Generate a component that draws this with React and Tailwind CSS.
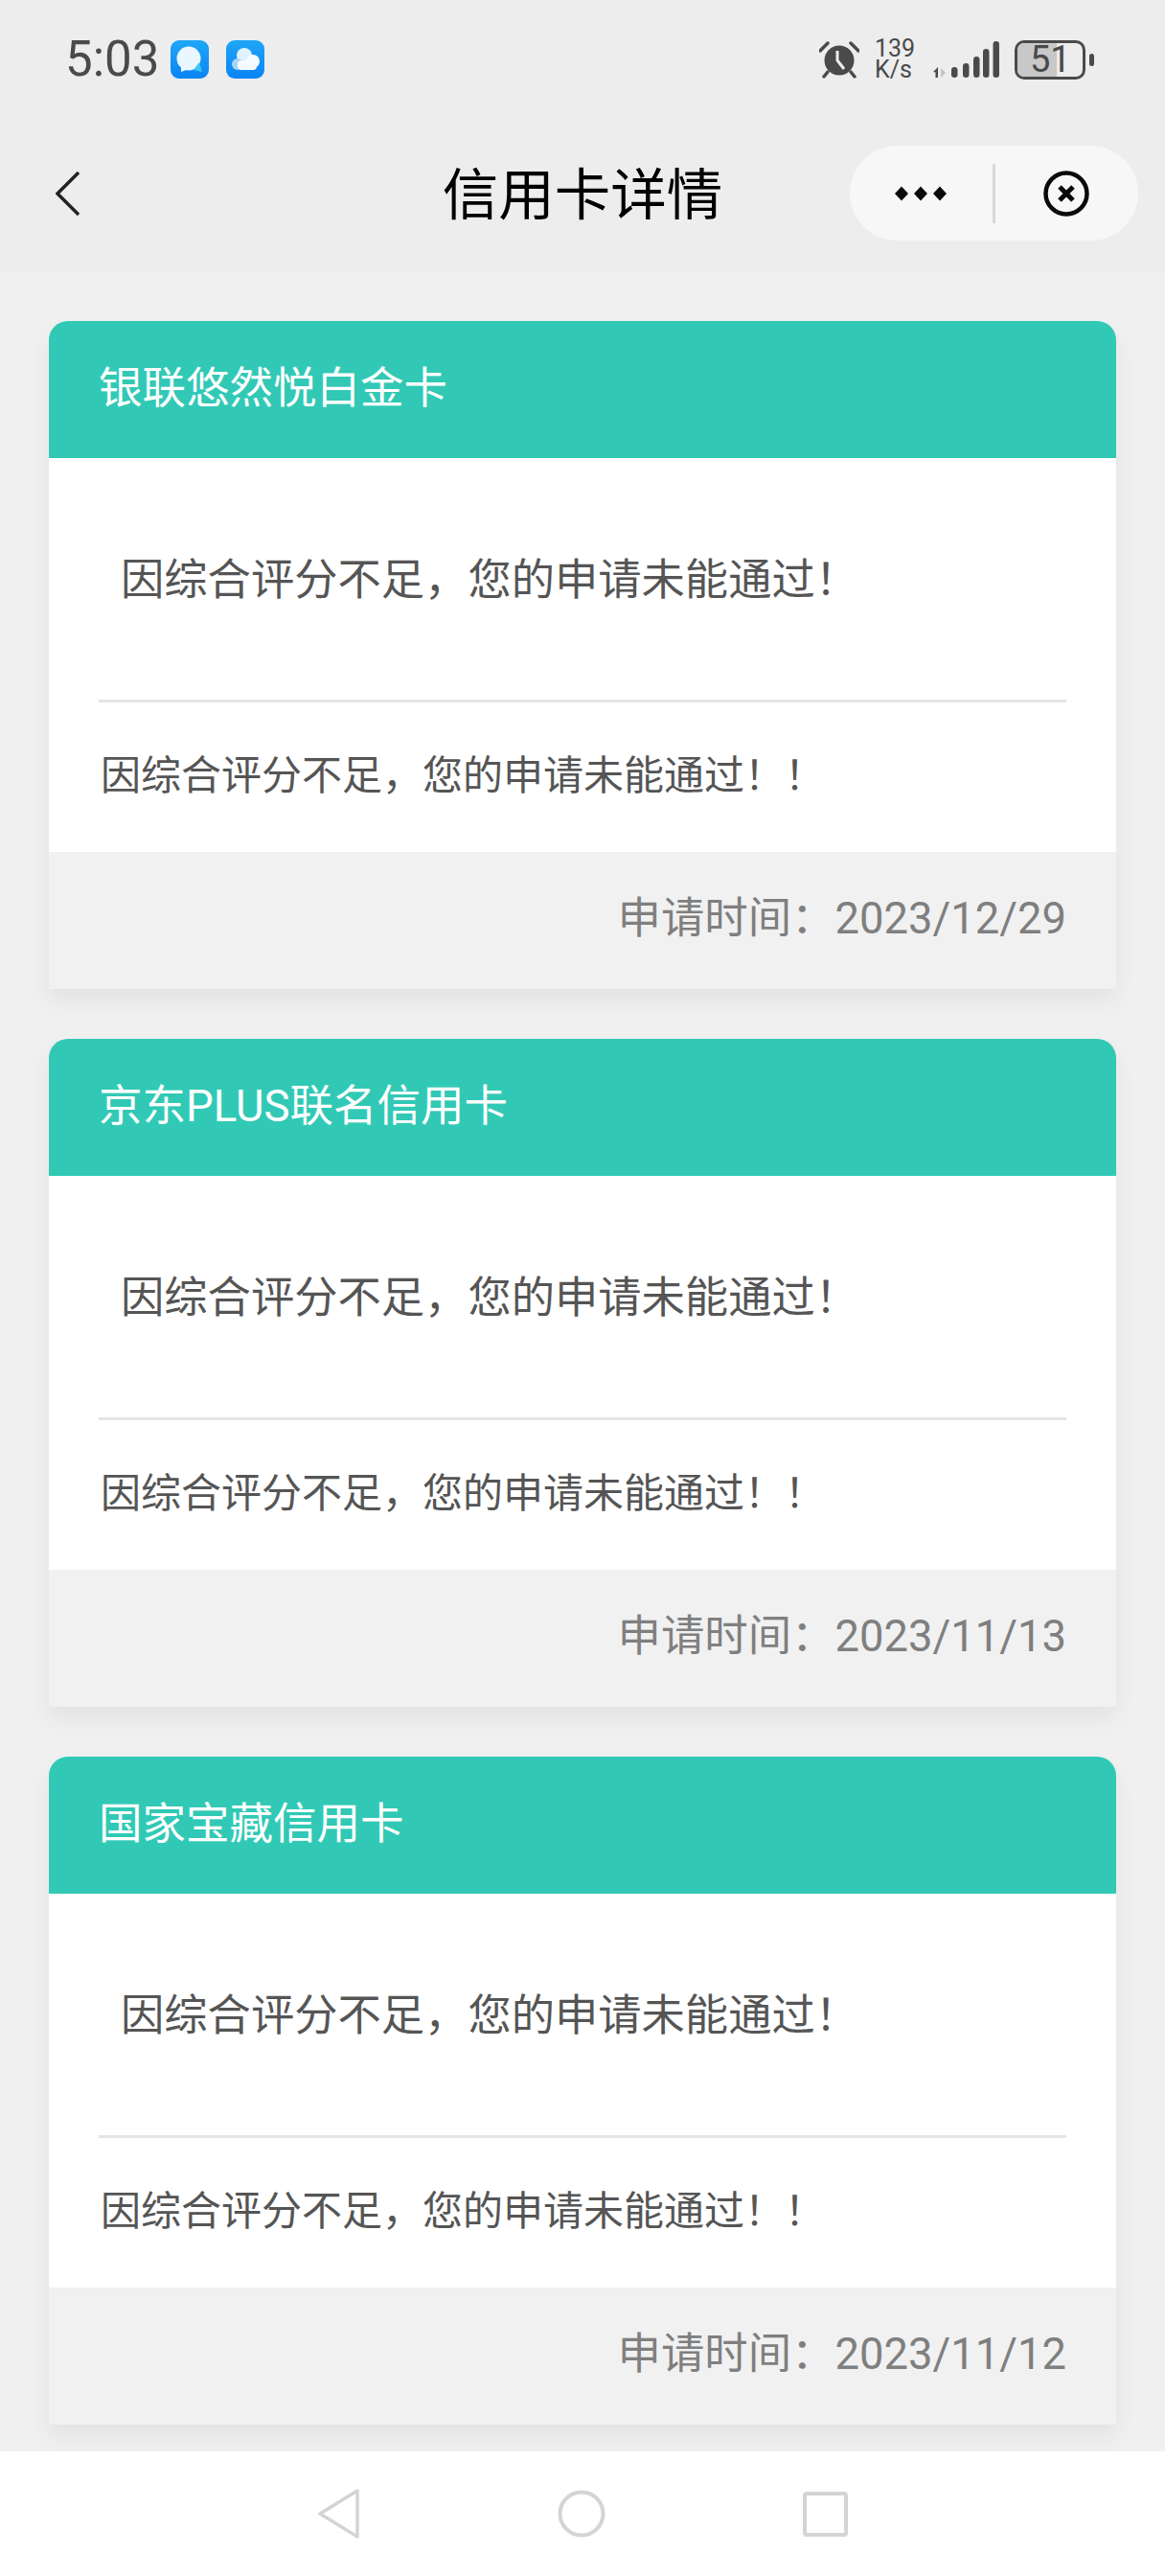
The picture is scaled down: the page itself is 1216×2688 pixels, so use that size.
import React from "react";

const cards = [
  { name: "银联悠然悦白金卡", date: "2023/12/29" },
  { name: "京东PLUS联名信用卡", date: "2023/11/13" },
  { name: "国家宝藏信用卡", date: "2023/11/12" },
];

const FONT = "font-['Roboto','Noto_Sans_CJK_SC',sans-serif]";

const AppIcon = ({ children }) => (
  <svg width="40" height="40" viewBox="0 0 40 40">
    <defs>
      <linearGradient id="appBlue" x1="0" y1="0" x2="0" y2="1">
        <stop offset="0" stopColor="#1fa6f7" />
        <stop offset="1" stopColor="#0a84f5" />
      </linearGradient>
    </defs>
    <rect width="40" height="40" rx="9" fill="url(#appBlue)" />
    {children}
  </svg>
);

const AlarmIcon = () => (
  <svg width="42" height="40" viewBox="0 0 42 40" fill="#4a4a4a">
    <circle cx="21" cy="21" r="15.5" />
    <path d="M1 11 L9 3" stroke="#4a4a4a" strokeWidth="3.5" strokeLinecap="round" />
    <path d="M41 11 L33 3" stroke="#4a4a4a" strokeWidth="3.5" strokeLinecap="round" />
    <path d="M9 33 L5 38" stroke="#4a4a4a" strokeWidth="3.5" strokeLinecap="round" />
    <path d="M33 33 L37 38" stroke="#4a4a4a" strokeWidth="3.5" strokeLinecap="round" />
    <path d="M19 11 L19 21 L26 30" fill="none" stroke="#ededed" strokeWidth="3" />
  </svg>
);

const SignalIcon = () => (
  <svg width="70" height="40" viewBox="0 0 70 40" fill="#4a4a4a">
    <path d="M1 33 L6 28 L6 39 L3.5 39 L3.5 33.5 Z" />
    <path d="M9 29 L14 34 L9 39 Z" fill="#c4c4c4" />
    <rect x="20" y="28" width="6.5" height="11" rx="3.2" />
    <rect x="32" y="24" width="6.5" height="15" rx="3.2" />
    <rect x="43" y="17" width="6.5" height="22" rx="3.2" />
    <rect x="53" y="9" width="6.5" height="30" rx="3.2" />
    <rect x="63.5" y="1" width="6.5" height="38" rx="3.2" />
  </svg>
);

const MoreIcon = () => (
  <svg width="54" height="16" viewBox="0 0 54 16" fill="#0a0a0a">
    <path d="M7 0.5 L14 8 L7 15.5 L0 8 Z" />
    <path d="M27 0.5 L34 8 L27 15.5 L20 8 Z" />
    <path d="M47 0.5 L54 8 L47 15.5 L40 8 Z" />
  </svg>
);

const CloseIcon = () => (
  <svg width="48" height="48" viewBox="0 0 48 48" fill="none" stroke="#0a0a0a">
    <circle cx="24" cy="24" r="21.5" strokeWidth="4.5" />
    <path d="M17 17 L31 31 M31 17 L17 31" strokeWidth="5" />
  </svg>
);

const CreditCard = ({ name, date }) => (
  <div className="w-[1114px] overflow-hidden rounded-t-[20px] shadow-[0_12px_24px_rgba(0,0,0,0.06)]">
    <div className="flex h-[143px] items-center bg-[#31c9b5] pb-[1px] pl-[52px] text-[45.5px] text-white">
      {name}
    </div>
    <div className="h-[411px] bg-white pt-[97px] text-[#555555]">
      <div className="h-[155px] pl-[75px] text-[45.3px] leading-[62px]">
        因综合评分不足，您的申请未能通过！
      </div>
      <div className="mx-[52px] h-[3px] bg-[#e5e5e5]" />
      <div className="pl-[54px] pt-[48px] text-[42px] leading-[58px]">
        因综合评分不足，您的申请未能通过！！
      </div>
    </div>
    <div className="flex h-[143px] items-center justify-end bg-[#f1f1f1] pb-[3px] pr-[52px] text-[45.4px] text-[#7f7f7f]">
      申请时间：{date}
    </div>
  </div>
);

const App = () => {
  return (
    <div className={`flex h-[2688px] w-[1216px] flex-col overflow-hidden bg-[#f0f0f0] ${FONT}`}>
      <div className="h-[283px] shrink-0 bg-[#ededed] px-[58px] pt-[41px]">
        <div className="flex h-[42px] items-center">
          <span className="ml-[10px] w-[110px] text-[51px] leading-[42px] text-[#4a4a4a]">5:03</span>
          <AppIcon>
            <circle cx="19" cy="19" r="12.5" fill="#eaf7fe" />
            <path d="M11 27 L11 33 L19 30 Z" fill="#eaf7fe" />
            <path d="M30 23 L33 33 L24 31 Z" fill="#39c6f2" />
          </AppIcon>
          <span className="w-[18px]" />
          <AppIcon>
            <circle cx="19" cy="16" r="8" fill="#dff2fd" />
            <circle cx="28" cy="22" r="7" fill="#f4fbff" />
            <circle cx="12" cy="25" r="6" fill="#a9d4f7" />
            <rect x="12" y="21" width="20" height="10" rx="4" fill="#f4fbff" />
          </AppIcon>
          <div className="ml-auto mr-[16px] flex items-center">
            <AlarmIcon />
            <div className="ml-[16px] w-[44px] text-[25px] leading-[22px] text-[#4a4a4a]">
              139
              <br />
              K/s
            </div>
            <div className="ml-[16px]">
              <SignalIcon />
            </div>
            <div className="relative ml-[16px] h-[41px] w-[74px] rounded-[10px] border-[3px] border-[#4a4a4a] text-[#4a4a4a]">
              <div className="h-full w-[41px] rounded-l-[7px] bg-[#c8c8c8]" />
              <span className="absolute inset-y-0 left-[13px] text-[38px] leading-[35px]">51</span>
            </div>
            <div className="ml-[4px] h-[13px] w-[5px] rounded-full bg-[#4a4a4a]" />
          </div>
        </div>
        <div className="relative mt-[69px] flex h-[99px] items-center">
          <svg width="25" height="46" viewBox="0 0 25 46" fill="none" stroke="#222222" strokeWidth="3.5">
            <path d="M24 1 L2 23 L24 45" />
          </svg>
          <div className="absolute left-[-58px] right-[-58px] top-[3px] text-center text-[58.5px] leading-[99px] text-black">
            信用卡详情
          </div>
          <div className="absolute right-[-30px] flex h-[99px] w-[301px] items-center rounded-full bg-[#f7f7f7]">
            <div className="ml-[47px]">
              <MoreIcon />
            </div>
            <div className="ml-[48px] h-[62px] w-[3px] bg-[#d8d8d8]" />
            <div className="ml-[50px]">
              <CloseIcon />
            </div>
          </div>
        </div>
      </div>
      <div className="flex flex-1 flex-col items-center gap-[52px] pt-[52px]">
        {cards.map((card) => (
          <CreditCard key={card.date} name={card.name} date={card.date} />
        ))}
      </div>
      <div className="relative z-10 flex h-[130px] shrink-0 items-start bg-white pl-[332px] pt-[39px]">
        <svg width="44" height="52" viewBox="0 0 44 52" fill="none" stroke="#d4d4d4" strokeWidth="3.5" strokeLinejoin="round">
          <path d="M41 2 L41 50 L2 26 Z" />
        </svg>
        <svg className="ml-[206px]" width="50" height="52" viewBox="0 0 50 52" fill="none" stroke="#d4d4d4" strokeWidth="4">
          <circle cx="25" cy="26" r="22.5" />
        </svg>
        <svg className="ml-[206px] mt-[3px]" width="47" height="47" viewBox="0 0 47 47" fill="none" stroke="#d4d4d4" strokeWidth="4">
          <rect x="2" y="2" width="43" height="43" rx="2" />
        </svg>
      </div>
    </div>
  );
};

export default App;
